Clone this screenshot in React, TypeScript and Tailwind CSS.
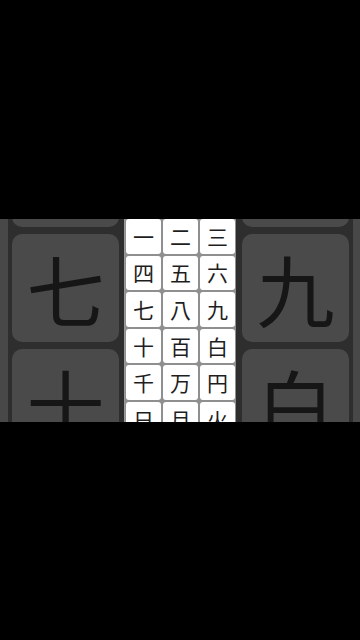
import React from "react";

const font = { fontFamily: '"Noto Sans CJK JP", "Noto Sans", sans-serif' };

const grid = [
  ["一", "二", "三"],
  ["四", "五", "六"],
  ["七", "八", "九"],
  ["十", "百", "白"],
  ["千", "万", "円"],
  ["日", "月", "火"],
];

function BigTile({ ch, first }: { ch: string; first?: boolean }) {
  return (
    <div
      className={
        "shrink-0 h-[108px] rounded-[10px] bg-[#4a4a4a] flex items-center justify-center text-[78px] leading-none text-[#161616] " +
        (first ? "mt-[-100px]" : "")
      }
    >
      {ch}
    </div>
  );
}

export default function App() {
  return (
    <div className="w-[360px] h-[640px] bg-black flex items-center" style={font}>
      <div className="w-full h-[203px] flex overflow-hidden">
        {/* left magnified column */}
        <div className="w-[124px] flex bg-[#2e2e2e]">
          <div className="w-[8px] bg-[#484848]" />
          <div className="w-[107px] ml-[4px] flex flex-col gap-[7px]">
            <BigTile ch="四" first />
            <BigTile ch="七" />
            <BigTile ch="十" />
          </div>
        </div>
        {/* center grid */}
        <div className="w-[112px] bg-[#8f8f8f] border-l border-[#9a9a9a] px-[1px] pt-[1px] mt-[-0.5px]">
          <div className="grid grid-cols-3 gap-[2px]">
            {grid.flat().map((c, i) => (
              <div
                key={i}
                className="h-[34.6px] rounded-[3px] bg-white flex items-center justify-center text-[21px] leading-none text-[#1e1e1e]"
              >
                {c}
              </div>
            ))}
          </div>
        </div>
        {/* right magnified column */}
        <div className="w-[124px] flex bg-[#2e2e2e]">
          <div className="w-[107px] ml-[6px] flex flex-col gap-[7px]">
            <BigTile ch="六" first />
            <BigTile ch="九" />
            <BigTile ch="白" />
          </div>
          <div className="ml-auto w-[7px] bg-[#484848]" />
        </div>
      </div>
    </div>
  );
}
